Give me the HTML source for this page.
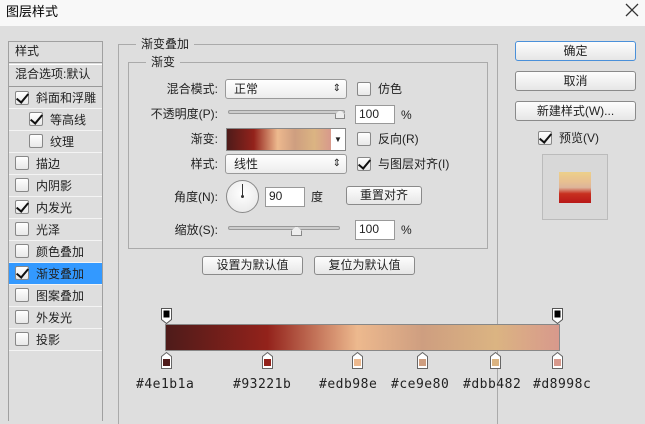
<!DOCTYPE html>
<html><head><meta charset="utf-8"><style>
*{margin:0;padding:0;box-sizing:border-box}
body{width:645px;height:417px;background:#dedede;position:relative;overflow:hidden;font-family:"Liberation Sans","Noto Sans CJK SC",sans-serif;font-size:12px;color:#222}
.a{position:absolute}
.t{position:absolute;white-space:nowrap;line-height:14px}
.cb{position:absolute;width:14px;height:14px;border:1px solid #888;background:linear-gradient(#fff,#e8e8e8);border-radius:2px}
.cb.on::after{content:"";position:absolute;left:3px;top:-1px;width:5px;height:10px;border:solid #111;border-width:0 2px 2px 0;transform:rotate(40deg)}
.row{position:absolute;left:9px;width:93px;height:22px;border-bottom:1px solid #f4f4f4}
.btn{position:absolute;border:1px solid #8a8a8a;border-radius:3px;background:linear-gradient(#fdfdfd,#e6e6e6);text-align:center;font-size:12px}
.inp{position:absolute;background:#fff;border:1px solid #999;font-size:12px;padding-left:3px;line-height:17px}
.sel{position:absolute;border:1px solid #999;border-radius:3px;background:linear-gradient(#fff,#ececec);padding-left:8px;line-height:18px}
.sel::after{content:"⇕";position:absolute;right:5px;top:0;font-size:10px}
.lbl{position:absolute;right:427px;white-space:nowrap;line-height:14px}
.trk{position:absolute;height:4px;border:1px solid #999;border-radius:2px;background:#ccc}
.hx{position:absolute;top:377px;font-family:"DejaVu Sans Mono","Liberation Mono",monospace;font-size:13px;letter-spacing:0.5px}
</style></head><body>
<div class="a" style="left:0;top:0;width:645px;height:26px;background:#f8f8f8"></div>
<div class="t" style="left:6px;top:5px;font-size:13px;color:#000">图层样式</div>
<svg class="a" style="left:624px;top:2px" width="16" height="16"><path d="M2 2L14 14M14 2L2 14" stroke="#333" stroke-width="1.3"/></svg>

<div class="a" style="left:8px;top:41px;width:95px;height:380px;border:1px solid #a0a0a0;border-bottom:none"></div>
<div class="a" style="left:9px;top:62px;width:93px;height:3px;border-top:1px solid #999;border-bottom:1px solid #fff"></div>
<div class="t" style="left:15px;top:44px">样式</div>
<div class="t" style="left:15px;top:67px">混合选项:默认</div>
<div class="a" style="left:9px;top:86px;width:93px;height:1px;background:#999"></div>
<div class="row" style="top:87px"></div><div class="cb on" style="left:15px;top:91px"></div><div class="t" style="left:36px;top:91px">斜面和浮雕</div>
<div class="row" style="top:109px"></div><div class="cb on" style="left:29px;top:112px"></div><div class="t" style="left:50px;top:113px">等高线</div>
<div class="row" style="top:131px"></div><div class="cb" style="left:29px;top:134px"></div><div class="t" style="left:50px;top:135px">纹理</div>
<div class="row" style="top:153px"></div><div class="cb" style="left:15px;top:156px"></div><div class="t" style="left:36px;top:157px">描边</div>
<div class="row" style="top:175px"></div><div class="cb" style="left:15px;top:178px"></div><div class="t" style="left:36px;top:179px">内阴影</div>
<div class="row" style="top:197px"></div><div class="cb on" style="left:15px;top:200px"></div><div class="t" style="left:36px;top:201px">内发光</div>
<div class="row" style="top:219px"></div><div class="cb" style="left:15px;top:222px"></div><div class="t" style="left:36px;top:223px">光泽</div>
<div class="row" style="top:241px"></div><div class="cb" style="left:15px;top:244px"></div><div class="t" style="left:36px;top:245px">颜色叠加</div>
<div class="row" style="top:263px;background:#3399ff"></div><div class="cb on" style="left:15px;top:266px"></div><div class="t" style="left:36px;top:267px">渐变叠加</div>
<div class="row" style="top:285px"></div><div class="cb" style="left:15px;top:288px"></div><div class="t" style="left:36px;top:289px">图案叠加</div>
<div class="row" style="top:307px"></div><div class="cb" style="left:15px;top:310px"></div><div class="t" style="left:36px;top:311px">外发光</div>
<div class="row" style="top:329px"></div><div class="cb" style="left:15px;top:332px"></div><div class="t" style="left:36px;top:333px">投影</div>

<div class="a" style="left:118px;top:44px;width:380px;height:380px;border:1px solid #aaa;border-bottom:none"></div>
<div class="t" style="left:136px;top:37px;background:#dedede;padding:0 5px">渐变叠加</div>
<div class="a" style="left:128px;top:62px;width:360px;height:187px;border:1px solid #aaa"></div>
<div class="t" style="left:146px;top:55px;background:#dedede;padding:0 5px">渐变</div>

<div class="lbl" style="top:82px">混合模式:</div>
<div class="sel" style="left:225px;top:79px;width:122px;height:20px">正常</div>
<div class="cb" style="left:357px;top:82px"></div><div class="t" style="left:378px;top:82px">仿色</div>

<div class="lbl" style="top:107px">不透明度(P):</div>
<div class="trk" style="left:228px;top:110px;width:117px"></div>
<div class="a" style="left:335px;top:110px;width:10px;height:9px;background:#eee;border:1px solid #888;clip-path:polygon(50% 0,100% 50%,100% 100%,0 100%,0 50%)"></div>
<div class="inp" style="left:355px;top:105px;width:40px;height:19px">100</div><div class="t" style="left:401px;top:108px">%</div>

<div class="lbl" style="top:132px">渐变:</div>
<div class="a" style="left:226px;top:128px;width:120px;height:23px;border:1px solid #888;background:#fff"></div>
<div class="a" style="left:227px;top:129px;width:104px;height:21px;background:linear-gradient(90deg,#4e1b1a 0%,#93221b 25.8%,#edb98e 48.7%,#ce9e80 65.3%,#dbb482 83.9%,#d8998c 100%)"></div>
<div class="t" style="left:334px;top:133px;font-size:8px">▼</div>
<div class="cb" style="left:357px;top:132px"></div><div class="t" style="left:378px;top:132px">反向(R)</div>

<div class="lbl" style="top:157px">样式:</div>
<div class="sel" style="left:225px;top:154px;width:122px;height:20px">线性</div>
<div class="cb on" style="left:357px;top:157px"></div><div class="t" style="left:378px;top:157px">与图层对齐(I)</div>

<div class="lbl" style="top:190px">角度(N):</div>
<div class="a" style="left:226px;top:180px;width:33px;height:33px;border-radius:50%;border:1px solid #888;background:radial-gradient(circle at 50% 40%,#fff,#e4e4e4)"></div>
<div class="a" style="left:242px;top:184px;width:1px;height:12px;background:#333"></div>
<div class="a" style="left:241px;top:195px;width:3px;height:3px;border-radius:50%;background:#333"></div>
<div class="inp" style="left:265px;top:187px;width:40px;height:20px">90</div><div class="t" style="left:311px;top:190px">度</div>
<div class="btn" style="left:346px;top:186px;width:76px;height:19px;line-height:17px">重置对齐</div>

<div class="lbl" style="top:223px">缩放(S):</div>
<div class="trk" style="left:228px;top:226px;width:112px"></div>
<div class="a" style="left:291px;top:226px;width:11px;height:10px;background:#eee;border:1px solid #888;clip-path:polygon(50% 0,100% 50%,100% 100%,0 100%,0 50%)"></div>
<div class="inp" style="left:355px;top:220px;width:40px;height:20px">100</div><div class="t" style="left:401px;top:223px">%</div>

<div class="btn" style="left:202px;top:256px;width:101px;height:19px;line-height:17px">设置为默认值</div>
<div class="btn" style="left:314px;top:256px;width:101px;height:19px;line-height:17px">复位为默认值</div>

<svg class="a" style="left:0;top:300px" width="645" height="75">
<g stroke="#555" stroke-width="1" fill="#fff">
<path d="M161.5 8.5h10v11l-5 4l-5-4z"/><path d="M552.5 8.5h10v11l-5 4l-5-4z"/>
</g>
<rect x="163.5" y="10.5" width="6" height="7" fill="#000"/><rect x="554.5" y="10.5" width="6" height="7" fill="#000"/>
<g stroke="#666" stroke-width="1" fill="#fff">
<path d="M161.5 68.5v-12l5-4l5 4v12z"/><path d="M262.5 68.5v-12l5-4l5 4v12z"/><path d="M352.5 68.5v-12l5-4l5 4v12z"/>
<path d="M417.5 68.5v-12l5-4l5 4v12z"/><path d="M490.5 68.5v-12l5-4l5 4v12z"/><path d="M552.5 68.5v-12l5-4l5 4v12z"/>
</g>
<rect x="163" y="59" width="7" height="7" fill="#4e1b1a"/><rect x="264" y="59" width="7" height="7" fill="#93221b"/>
<rect x="354" y="59" width="7" height="7" fill="#edb98e"/><rect x="419" y="59" width="7" height="7" fill="#ce9e80"/>
<rect x="492" y="59" width="7" height="7" fill="#dbb482"/><rect x="554" y="59" width="7" height="7" fill="#d8998c"/>
</svg>
<div class="a" style="left:165px;top:324px;width:395px;height:27px;border:1px solid #888;background:linear-gradient(90deg,#4e1b1a 0%,#93221b 25.8%,#edb98e 48.7%,#ce9e80 65.3%,#dbb482 83.9%,#d8998c 100%)"></div>
<div class="hx" style="left:136px">#4e1b1a</div>
<div class="hx" style="left:233px">#93221b</div>
<div class="hx" style="left:319px">#edb98e</div>
<div class="hx" style="left:391px">#ce9e80</div>
<div class="hx" style="left:463px">#dbb482</div>
<div class="hx" style="left:533px">#d8998c</div>

<div class="btn" style="left:515px;top:41px;width:121px;height:20px;line-height:18px;border-color:#4a90d9">确定</div>
<div class="btn" style="left:515px;top:71px;width:121px;height:20px;line-height:18px">取消</div>
<div class="btn" style="left:515px;top:101px;width:121px;height:20px;line-height:18px">新建样式(W)...</div>
<div class="cb on" style="left:538px;top:131px"></div><div class="t" style="left:559px;top:131px">预览(V)</div>
<div class="a" style="left:542px;top:154px;width:66px;height:66px;border:1px solid #bbb;background:#d8d8d8"></div>
<div class="a" style="left:559px;top:172px;width:32px;height:31px;background:linear-gradient(#edd08a 0%,#e8c090 30%,#ddb49a 50%,#c83020 70%,#b81818 100%)"></div>
</body></html>
